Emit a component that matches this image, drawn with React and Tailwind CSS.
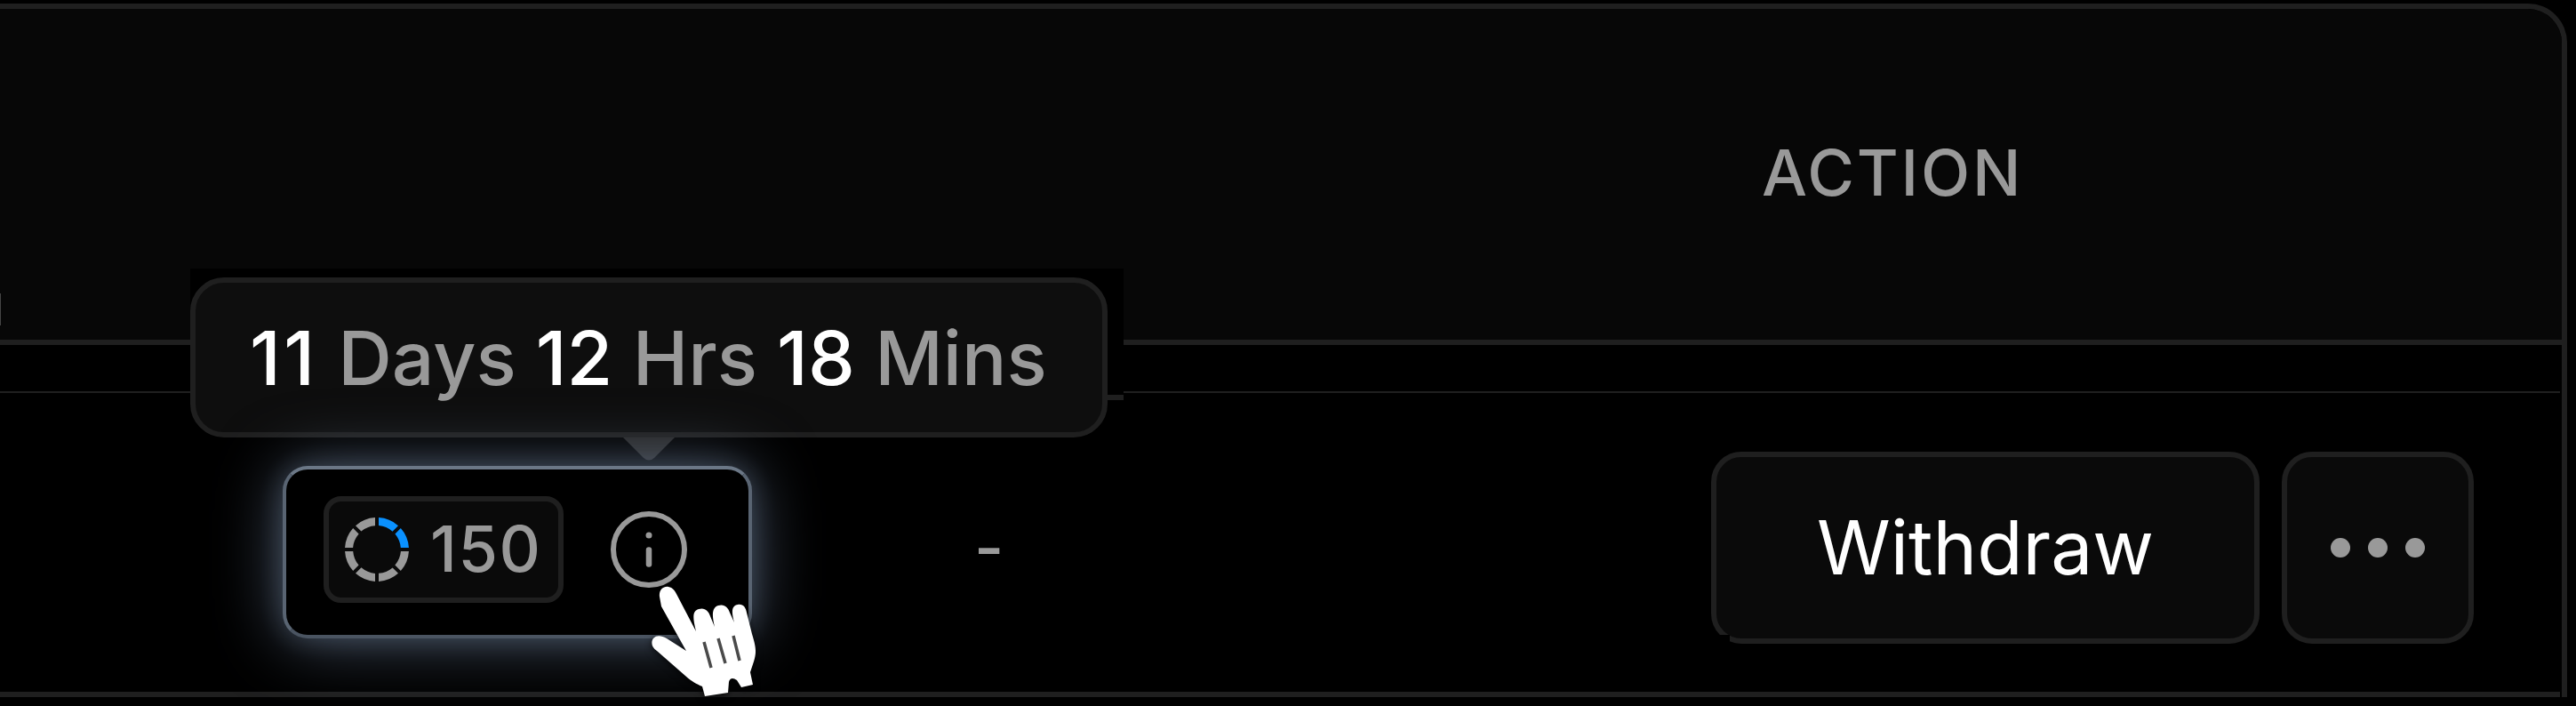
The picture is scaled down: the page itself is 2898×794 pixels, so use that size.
import { useState } from "react";

const RING_SEGMENTS = 8;

function ProgressRing({ filled }) {
  return (
    <svg className="size-[72px] shrink-0" viewBox="-36 -36 72 72" fill="none">
      {Array.from({ length: RING_SEGMENTS }).map((_, i) => (
        <path
          key={i}
          d="M2 -35.94A36 36 0 0 1 24 -26.83L17.53 -20.36A27 27 0 0 0 2 -26.92Z"
          fill={i < filled ? "#0a91ff" : "#999999"}
          transform={`rotate(${i * 45})`}
        />
      ))}
    </svg>
  );
}

function InfoIcon() {
  return (
    <svg className="size-[88px] shrink-0" viewBox="0 0 88 88" fill="none">
      <circle cx="44" cy="44" r="40" stroke="#999999" strokeWidth="6" />
      <circle cx="44" cy="28" r="3.5" fill="#999999" />
      <path d="M44 44.5V60.5" stroke="#999999" strokeWidth="6.5" strokeLinecap="round" />
    </svg>
  );
}

function HandCursor() {
  return (
    <svg
      className="absolute left-[726px] top-[652px] z-20 h-[142px] w-[130px] drop-shadow-[0_2px_4px_rgba(0,0,0,0.8)]"
      viewBox="0 0 130 142"
    >
      <path
        fill="#ffffff"
        d="M16 19C15 12 20 7 26 8C31 9 33 12 35 16L57 58C53 42 53 35 60 33C67 31 71 35 73 41L78 53C74 37 76 31 82 29C89 27 93 31 95 37L100 48C96 34 98 29 104 28C110 27 113 31 114 37L120 61C125 77 125 82 122 92L118 104L121 118L108 121L103 113C99 110 95 110 94 115L93 127L67 131L64 120C57 117 53 115 45 108L13 80C7 76 6 70 9 66C13 62 18 63 24 66L46 80L18 30Z"
      />
      <path
        d="M66 70L74 99M82 66L90 94M99 63L106 91"
        stroke="#4a4a4a"
        strokeWidth="3.5"
        fill="none"
      />
    </svg>
  );
}

function TimePart({ value, unit, valueClass = "" }) {
  return (
    <span className="text-[#999999]">
      <span className={`text-white ${valueClass}`}>{value}</span> {unit}
    </span>
  );
}

function TimeLeftTooltip() {
  return (
    <div className="absolute left-[214px] top-[302px] h-[190px] w-[1050px]">
      <div className="h-[148px] border-b-6 border-[#1f1f1f] bg-black" />
      <div className="absolute left-0 top-[10px] flex h-[180px] w-[1032px] items-center gap-[22px] whitespace-nowrap rounded-[38px] border-6 border-[#1f1f1f] bg-[#0e0e0e] pl-[61px] pt-px text-[84px] font-medium leading-none">
        <TimePart value="11" unit="Days" valueClass="tracking-[3.5px]" />
        <TimePart value="12" unit="Hrs" />
        <TimePart value="18" unit="Mins" />
      </div>
      <svg className="absolute left-[487px] top-[190px] h-[26px] w-[58px]" viewBox="0 0 58 26">
        <path d="M0 0H58L35 23Q29 28 23 23Z" fill="#292929" />
      </svg>
    </div>
  );
}

function App() {
  const [showTime, setShowTime] = useState(true);

  return (
    <div className="relative h-[794px] w-[2898px] overflow-hidden bg-black pt-1 font-['Inter',sans-serif]">
      <div className="h-[780px] w-[2888px] rounded-tr-[44px] border-r-6 border-t-6 border-[#1f1f1f]">
        <div className="flex h-[378px] items-center rounded-tr-[38px] border-b-6 border-[#1f1f1f] bg-[#070707]">
          {/* edge of the previous column's heading */}
          <div className="mt-[320px] h-9 w-px self-start bg-[#444444]" />
          <div className="ml-[1981px] pb-1 text-[72px] font-medium leading-none tracking-[2.8px] text-[#999999]">
            ACTION
          </div>
        </div>

        <div className="mr-[2px] h-[54px] border-b-2 border-[#1f1f1f]" />

        <div className="mr-[2px] flex h-[342px] items-start border-b-6 border-[#1f1f1f] pl-[318px]">
          <div className="relative z-10 mt-[82px] flex h-[194px] w-[528px] items-center rounded-[28px] border-4 border-b-[#4a5461] border-l-[#596472] border-r-[#596472] border-t-[#6b7786] bg-black pb-[6px] pl-[42px] shadow-[0_2px_76px_rgba(130,152,184,0.55),0_0_30px_rgba(130,150,180,0.28)]">
            <div className="flex h-[120px] w-[270px] items-center gap-[24px] rounded-[20px] border-6 border-[#1f1f1f] bg-[#0a0a0a] pl-[18px] text-[72px] font-medium leading-none text-[#999999]">
              <ProgressRing filled={2} />
              <span className="pb-[2px] tracking-[1.5px]">150</span>
            </div>
            <button className="ml-[52px]" onClick={() => setShowTime(!showTime)}>
              <InfoIcon />
            </button>
          </div>

          <div className="ml-[250px] mt-[138px] w-[60px] text-[72px] font-medium leading-none text-[#999999]">
            -
          </div>

          <div className="relative ml-[769px] mt-[66px] flex gap-[25px]">
            <button className="h-[216px] w-[617px] rounded-[34px] border-6 border-[#1f1f1f] bg-[#0a0a0a] text-[84px] leading-none text-white">
              Withdraw
            </button>
            <button className="flex size-[216px] items-center justify-center gap-[20px] rounded-[34px] border-6 border-[#1f1f1f] bg-[#0a0a0a]">
              <span className="size-[22px] rounded-full bg-[#999999]" />
              <span className="size-[22px] rounded-full bg-[#999999]" />
              <span className="size-[22px] rounded-full bg-[#999999]" />
            </button>
            <span className="absolute bottom-0 left-0 h-[10px] w-[21px] bg-black" />
          </div>
        </div>
      </div>

      {showTime && <TimeLeftTooltip />}
      <HandCursor />
    </div>
  );
}

export default App;
